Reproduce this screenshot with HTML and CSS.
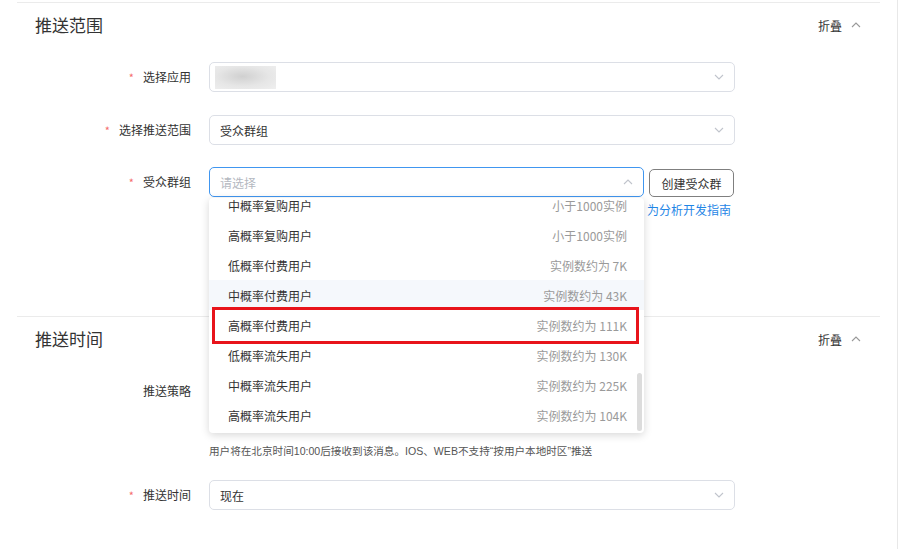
FILE: index.html
```html
<!DOCTYPE html>
<html lang="zh-CN">
<head>
  <meta charset="UTF-8">
  <title>推送设置</title>
  <link rel="stylesheet" href="styles.css">
</head>
<body>

<div class="page">
  <div class="content">

    <section class="panel panel-scope">
      <div class="panel-head">
        <h2>推送范围</h2>
        <a class="fold">折叠
          <svg width="10" height="6" viewBox="0 0 10 6"><path d="M1 5l4-4 4 4" fill="none" stroke="#999" stroke-width="1.1"/></svg>
        </a>
      </div>

      <div class="form">
        <div class="field">
          <label class="required">选择应用</label>
          <div class="control">
            <div class="select">
              <span class="masked"></span>
              <svg class="arrow" width="10" height="6" viewBox="0 0 10 6"><path d="M1 1l4 4 4-4" fill="none" stroke="#c0c4cc" stroke-width="1.1"/></svg>
            </div>
          </div>
        </div>

        <div class="field">
          <label class="required">选择推送范围</label>
          <div class="control">
            <div class="select">
              <span class="value">受众群组</span>
              <svg class="arrow" width="10" height="6" viewBox="0 0 10 6"><path d="M1 1l4 4 4-4" fill="none" stroke="#c0c4cc" stroke-width="1.1"/></svg>
            </div>
          </div>
        </div>

        <div class="field field-audience">
          <label class="required">受众群组</label>
          <div class="control">
            <div class="inline">
              <div class="select select-open">
                <span class="placeholder">请选择</span>
                <svg class="arrow" width="10" height="6" viewBox="0 0 10 6"><path d="M1 5l4-4 4 4" fill="none" stroke="#c0c4cc" stroke-width="1.1"/></svg>

                <div class="dropdown">
                  <ul class="options">
                    <li><span>中概率复购用户</span><em>小于1000实例</em></li>
                    <li><span>高概率复购用户</span><em>小于1000实例</em></li>
                    <li><span>低概率付费用户</span><em>实例数约为 7K</em></li>
                    <li class="hover"><span>中概率付费用户</span><em>实例数约为 43K</em></li>
                    <li><span>高概率付费用户</span><em>实例数约为 111K</em></li>
                    <li><span>低概率流失用户</span><em>实例数约为 130K</em></li>
                    <li><span>中概率流失用户</span><em>实例数约为 225K</em></li>
                    <li><span>高概率流失用户</span><em>实例数约为 104K</em></li>
                  </ul>
                  <div class="highlight"></div>
                  <div class="scrollbar"></div>
                </div>
              </div>
              <button class="btn">创建受众群</button>
            </div>
            <p class="tip"><a href="#">为分析开发指南</a></p>
          </div>
        </div>
      </div>
    </section>

    <section class="panel">
      <div class="panel-head">
        <h2>推送时间</h2>
        <a class="fold">折叠
          <svg width="10" height="6" viewBox="0 0 10 6"><path d="M1 5l4-4 4 4" fill="none" stroke="#999" stroke-width="1.1"/></svg>
        </a>
      </div>

      <div class="form">
        <div class="field field-strategy">
          <label>推送策略</label>
          <div class="control">
            <div class="radios"></div>
            <p class="hint">用户将在北京时间10:00后接收到该消息。IOS、WEB不支持“按用户本地时区”推送</p>
          </div>
        </div>

        <div class="field">
          <label class="required">推送时间</label>
          <div class="control">
            <div class="select">
              <span class="value">现在</span>
              <svg class="arrow" width="10" height="6" viewBox="0 0 10 6"><path d="M1 1l4 4 4-4" fill="none" stroke="#c0c4cc" stroke-width="1.1"/></svg>
            </div>
          </div>
        </div>
      </div>
    </section>

  </div>
</div>

</body>
</html>
```

FILE: styles.css
```css
* {
  box-sizing: border-box;
}
body {
  margin: 0;
  background: #fff;
  font-family: "Noto Sans CJK SC", "Noto Sans", sans-serif;
  font-size: 12px;
  color: #333;
}
.page {
  width: 898px;
  height: 549px;
  border-right: 1px solid #e8e8e8;
  overflow: hidden;
}
.content {
  margin-left: 17px;
  width: 863px;
  padding-top: 2px;
}
.panel {
  border-top: 1px solid #ebebeb;
}
.panel-scope {
  padding-bottom: 98px;
}
.panel-head {
  height: 44px;
  padding: 0 19px 0 18px;
  display: flex;
  align-items: center;
  justify-content: space-between;
}
.panel-head h2 {
  margin: 0;
  font-size: 17px;
  font-weight: normal;
  color: #333;
  line-height: 24px;
}
.fold {
  display: flex;
  align-items: center;
  gap: 9px;
  font-size: 12px;
  color: #333;
  cursor: pointer;
}
.form {
  display: flex;
  flex-direction: column;
  padding-top: 15px;
}
.field {
  display: flex;
  align-items: flex-start;
  margin-bottom: 23px;
}
.field:nth-child(2) {
  margin-bottom: 22px;
}
.field-audience,
.field:last-child {
  margin-bottom: 0;
}
.field > label {
  width: 174px;
  margin-right: 18px;
  text-align: right;
  line-height: 30px;
  color: #333;
}
.field > label.required::before {
  content: "*";
  color: #f56c6c;
  font-size: 11px;
  margin-right: 9px;
}
.control {
  width: 526px;
}
.select {
  position: relative;
  height: 30px;
  border: 1px solid #dcdfe6;
  border-radius: 5px;
  padding: 0 10px;
  display: flex;
  align-items: center;
  justify-content: space-between;
  background: #fff;
}
.select .value {
  color: #333;
}
.select .placeholder {
  color: #b4b8bf;
}
.masked {
  width: 61px;
  height: 23px;
  margin-left: -5px;
  background: radial-gradient(ellipse at 45% 45%, #d0d0d0 0%, #e6e6e6 55%, #efefef 100%);
}
.inline {
  display: flex;
  align-items: flex-start;
}
.select-open {
  width: 435px;
  border-color: #4096f0;
}
.btn {
  margin: 2px 0 0 5px;
  width: 85px;
  height: 28px;
  border: 1px solid #7f7f7f;
  border-radius: 5px;
  background: #fff;
  font-family: inherit;
  font-size: 12px;
  color: #333;
  padding: 0;
}
.tip {
  margin: 5px 0 0;
  padding-right: 4px;
  text-align: right;
  line-height: 16px;
  color: #666;
}
.tip a {
  color: #1f86e6;
  text-decoration: none;
}
.dropdown {
  position: absolute;
  top: 30px;
  left: -1px;
  width: 435px;
  height: 235px;
  background: #fff;
  border-radius: 4px;
  box-shadow: 0 2px 9px rgba(0, 0, 0, 0.16);
  overflow: hidden;
  z-index: 10;
}
.options {
  list-style: none;
  margin: -8px 0 0;
  padding: 0;
}
.options li {
  height: 30px;
  padding: 0 17px 0 19px;
  display: flex;
  align-items: center;
  justify-content: space-between;
}
.options li.hover {
  background: #f5f8fc;
}
.options em {
  font-style: normal;
  color: #9a9a9a;
}
.highlight {
  position: absolute;
  top: 109px;
  left: 3px;
  width: 427px;
  height: 37px;
  border: 3px solid #e8141b;
}
.scrollbar {
  position: absolute;
  top: 175px;
  right: 2px;
  width: 5px;
  height: 58px;
  border-radius: 3px;
  background: #dcdcdc;
}
.radios {
  height: 68px;
}
.hint {
  margin: 0;
  font-family: "Liberation Sans", "Noto Sans CJK SC", sans-serif;
  font-size: 10.6px;
  line-height: 14px;
  color: #555;
  white-space: nowrap;
}
.field-strategy {
  margin-bottom: 22px;
}
```
